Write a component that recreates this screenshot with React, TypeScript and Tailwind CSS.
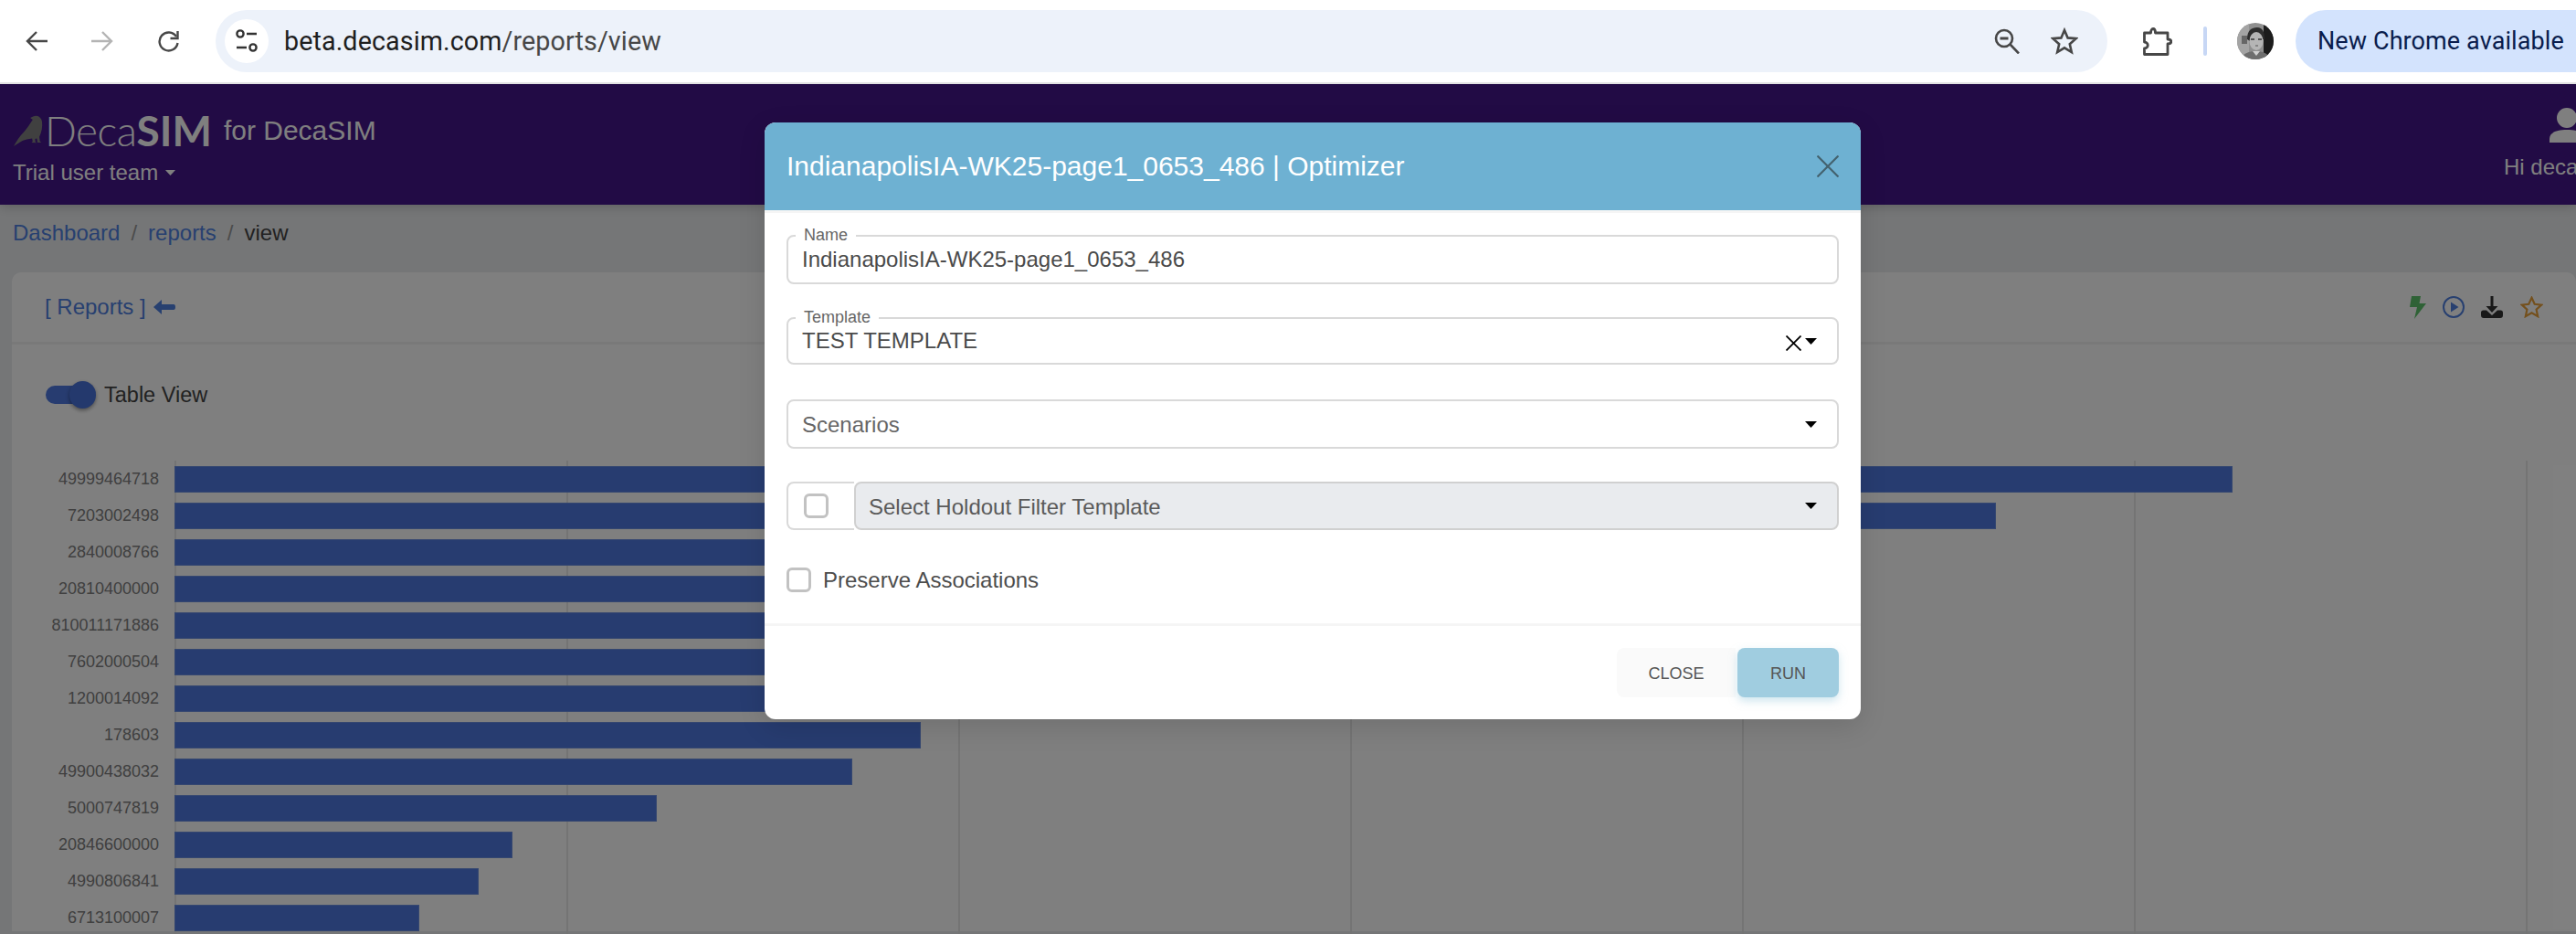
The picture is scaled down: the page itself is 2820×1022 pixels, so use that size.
import React from "react";

const bars: [string, number][] = [
  ["49999464718", 2253],
  ["7203002498", 1994],
  ["2840008766", 1600],
  ["20810400000", 1400],
  ["810011171886", 1300],
  ["7602000504", 1200],
  ["1200014092", 1050],
  ["178603", 817],
  ["49900438032", 742],
  ["5000747819", 528],
  ["20846600000", 370],
  ["4990806841", 333],
  ["6713100007", 268],
];

function Caret({ className }: { className: string }) {
  return (
    <svg viewBox="0 0 13 7" className={className} fill="currentColor">
      <path d="M0 0h13L6.5 7z" />
    </svg>
  );
}

function Bird({ className }: { className: string }) {
  return (
    <svg viewBox="10 30 100 105" className={className} fill="#808080">
      <path d="M13 134 C22 118 34 100 46 88 C56 76 66 62 76 46 L68 40 C74 37 80 33 88 33 C98 34 105 41 107 52 C109 68 106 88 98 103 L100 118 L105 122 L90 122 L92 120 L90 108 L84 110 L85 120 L90 123 L72 122 L76 118 L74 108 C62 110 50 112 42 116 C32 122 22 128 13 134 Z" />
    </svg>
  );
}

function Avatar() {
  return (
    <svg viewBox="0 0 40 40" className="h-10 w-10 shrink-0">
      <defs>
        <clipPath id="av">
          <circle cx="20" cy="20" r="20" />
        </clipPath>
      </defs>
      <g clipPath="url(#av)">
        <rect width="40" height="40" fill="#8f8f8f" />
        <rect x="0" y="0" width="13" height="40" fill="#a4a4a4" />
        <rect x="29" y="0" width="11" height="40" fill="#1c1c1c" />
        <rect x="5" y="14" width="6" height="9" fill="#666" />
        <path d="M11 18 C11 8 16 5 22 5 C28 5 30 10 30 18 L28 18 C27 13 24 12 20 12 C16 12 14 14 14 20 Z" fill="#2e2e2e" />
        <ellipse cx="21" cy="20" rx="7.5" ry="10" fill="#b5b5b5" />
        <path d="M15 18h4M23 18h4" stroke="#333" strokeWidth="1.5" />
        <path d="M20 25h3" stroke="#555" strokeWidth="1.2" />
        <path d="M4 40 C6 33 14 31 20 31 C28 31 34 33 36 40 Z" fill="#6e6e6e" />
        <path d="M17 31 L21 36 L25 31 Z" fill="#d0d0d0" />
      </g>
    </svg>
  );
}

function Chrome() {
  return (
    <div className="flex h-[90px] items-center bg-white [font-family:Roboto,sans-serif]">
      <svg viewBox="0 0 24 22" className="ml-[28px] h-[22px] w-[24px] shrink-0" fill="none" stroke="#474747" strokeWidth="2.4">
        <path d="M24 11H2M12 1 2 11l10 10" />
      </svg>
      <svg viewBox="0 0 24 22" className="ml-[48px] h-[22px] w-[24px] shrink-0" fill="none" stroke="#b4b4b4" strokeWidth="2.4">
        <path d="M0 11h22M12 1l10 10-10 10" />
      </svg>
      <svg viewBox="0 0 25 24" className="ml-[48px] h-[24px] w-[25px] shrink-0" fill="none" stroke="#474747" strokeWidth="2.4">
        <path d="M21 7 A10 10 0 1 0 22.5 14" />
        <path d="M22.5 1v8h-8" strokeWidth="2.4" />
      </svg>
      <div className="ml-[39px] flex h-[68px] w-[2071px] shrink-0 items-center rounded-full bg-[#edf2fa]">
        <div className="ml-[10px] flex h-[48px] w-[48px] items-center justify-center rounded-full bg-white">
          <svg viewBox="0 0 24 28" className="h-[28px] w-[24px]" fill="none" stroke="#333" strokeWidth="2.4">
            <circle cx="5" cy="6" r="3.6" />
            <path d="M12 6h11M1 21h11" />
            <circle cx="19" cy="21" r="3.6" />
          </svg>
        </div>
        <div className="ml-[17px] text-[28.7px] leading-[34px] tracking-[0.1px] text-[#1f1f1f]">
          beta.decasim.com<span className="text-[#474747]">/reports/view</span>
        </div>
        <svg viewBox="0 0 28 28" className="ml-auto h-[28px] w-[28px]" fill="none" stroke="#474747" strokeWidth="2.6">
          <circle cx="11" cy="11" r="9" />
          <path d="M17.5 17.5 27 27.5" />
          <path d="M6.5 11h9" strokeWidth="3" />
        </svg>
        <svg viewBox="0 0 30 30" className="ml-[34px] mr-[32px] h-[30px] w-[30px]" fill="none" stroke="#474747" strokeWidth="2.6" strokeLinejoin="miter">
          <path d="M15 3l3.6 8.4 9 .8-6.8 6 2 8.8L15 22.3 7.2 27l2-8.8-6.8-6 9-.8z" />
        </svg>
      </div>
      <svg viewBox="0 0 32 32" className="ml-[39px] h-[32px] w-[32px] shrink-0" fill="none" stroke="#474747" strokeWidth="2.8" strokeLinejoin="round">
        <path d="M1.5 7h7c0-6 5-6 5 0h13.5v7c5 0 5 5 0 5v11.5H1.5V24c5 0 5-7 0-7z" />
      </svg>
      <div className="ml-[34px] h-[32px] w-[4px] shrink-0 rounded-full bg-[#c7d7f5]" />
      <div className="ml-[33px] shrink-0">
        <Avatar />
      </div>
      <div className="ml-[24px] flex h-[68px] w-[308px] shrink-0 items-center rounded-l-full bg-[#d3e3fd] pl-[24px] text-[27px] tracking-[0.1px] text-[#0a1d4d] whitespace-nowrap">
        New Chrome available
      </div>
    </div>
  );
}

function Field({
  label,
  children,
  className,
}: {
  label?: string;
  children: React.ReactNode;
  className: string;
}) {
  return (
    <div className={`relative flex items-center rounded-[8px] border-2 border-[#d9d9d9] pl-[15px] pr-[22px] ${className}`}>
      {label && (
        <span className="absolute -top-[13px] left-[8px] bg-white px-[9px] text-[18px] leading-[22px] text-[#666]">
          {label}
        </span>
      )}
      {children}
    </div>
  );
}

function Modal() {
  return (
    <div className="absolute left-[837px] top-[42px] w-[1200px] overflow-hidden rounded-[12px] bg-white shadow-[0_8px_30px_rgba(0,0,0,0.12)] [font-family:'Liberation_Sans',Arial,sans-serif]">
      <div className="flex h-[96px] items-center justify-between bg-[#6eb1d2] pl-[24px] pr-[24px]">
        <div className="text-[30px] leading-[36px] text-white">IndianapolisIA-WK25-page1_0653_486 | Optimizer</div>
        <svg viewBox="0 0 24 24" className="h-[24px] w-[24px]" fill="none" stroke="#44626f" strokeWidth="2.2">
          <path d="M.5.5l23 23M23.5.5l-23 23" />
        </svg>
      </div>
      <div className="h-[3px] bg-[#f5f5f5]" />
      <div className="flex flex-col px-[24px] pt-[24px]">
        <Field label="Name" className="h-[54px]">
          <span className="text-[24px] text-[#4a4a4a]">IndianapolisIA-WK25-page1_0653_486</span>
        </Field>
        <Field label="Template" className="mt-[36px] h-[52px]">
          <span className="text-[24px] text-[#4a4a4a]">TEST TEMPLATE</span>
          <svg viewBox="0 0 17 17" className="ml-auto mt-[5px] h-[17px] w-[17px]" fill="none" stroke="#000" strokeWidth="1.8">
            <path d="M.5.5l16 16M16.5.5l-16 16" />
          </svg>
          <Caret className="ml-[4px] h-[7px] w-[13px] text-black" />
        </Field>
        <Field className="mt-[38px] h-[54px] justify-between">
          <span className="pt-[2px] text-[24px] text-[#666]">Scenarios</span>
          <Caret className="h-[7px] w-[13px] text-black" />
        </Field>
        <div className="mt-[36px] flex h-[53px]">
          <div className="flex w-[74px] items-center rounded-l-[8px] border-2 border-r-0 border-[#d9d9d9] pl-[17px]">
            <div className="h-[27px] w-[27px] rounded-[6px] border-[3px] border-[#c2c2c2] bg-white" />
          </div>
          <div className="flex flex-1 items-center justify-between rounded-[8px] border-2 border-[#d0d0d0] bg-[#e9ebee] pl-[14px] pr-[22px]">
            <span className="pt-[2px] text-[24px] text-[#5a5a5a]">Select Holdout Filter Template</span>
            <Caret className="h-[7px] w-[13px] text-black" />
          </div>
        </div>
        <div className="mb-[34px] mt-[41px] flex items-center gap-[13px]">
          <div className="h-[27px] w-[27px] rounded-[6px] border-[3px] border-[#c2c2c2] bg-white" />
          <span className="text-[24px] leading-[27px] text-[#4d4d4d]">Preserve Associations</span>
        </div>
      </div>
      <div className="h-[3px] bg-[#f5f5f5]" />
      <div className="flex justify-end px-[24px] pb-[24px] pt-[24px]">
        <div className="flex h-[54px] w-[130px] items-center justify-center rounded-l-[8px] bg-[#fafafa] pt-[2px] text-[18px] text-[#555]">
          CLOSE
        </div>
        <div className="ml-[2px] flex h-[54px] w-[111px] items-center justify-center rounded-[8px] bg-[#a0cde0] pt-[2px] text-[18px] text-[#555] shadow-[0_4px_10px_rgba(160,205,224,0.5)]">
          RUN
        </div>
      </div>
    </div>
  );
}

function Header() {
  return (
    <div className="relative flex h-[132px] justify-between overflow-hidden bg-[#44168a] pl-[14px] text-white shadow-[0_2px_12px_rgba(0,0,0,0.2)] [font-family:'Liberation_Sans',Arial,sans-serif]">
      <div className="pt-[33px]">
        <div className="flex h-[35px] items-center">
          <Bird className="h-[36px] w-[33px]" />
          <span className="ml-[2px] text-[46px] font-light tracking-[-0.5px] [font-family:Lato,sans-serif]">Deca</span>
          <span className="text-[46px] font-bold [font-family:Lato,sans-serif]">SIM</span>
          <span className="ml-[13px] text-[30px]">for DecaSIM</span>
        </div>
        <div className="mt-[15px] flex items-center text-[24px] leading-[28px]">
          Trial user team
          <Caret className="ml-[7px] h-[6px] w-[13px] text-white" />
        </div>
      </div>
      <div className="w-[79px] shrink-0 whitespace-nowrap">
        <svg viewBox="0 0 38 38" className="ml-[50px] mt-[26px] h-[38px] w-[38px]" fill="#ffffff">
          <circle cx="19" cy="11" r="11" />
          <path d="M0 38v-4c0-7 7-10 19-10s19 3 19 10v4z" />
        </svg>
        <div className="mt-[13px] text-[24px] leading-[28px]">Hi decasim</div>
      </div>
    </div>
  );
}

function CardIcons() {
  return (
    <div className="flex items-center">
      <svg viewBox="0 0 18 25" className="h-[25px] w-[18px]" fill="#5ec46c">
        <path d="M2 0h10l-1.5 8H18L5 25l3-13H0z" />
      </svg>
      <svg viewBox="0 0 24 24" className="ml-[18px] h-[24px] w-[24px]" fill="none" stroke="#5080e0" strokeWidth="2">
        <circle cx="12" cy="12" r="11" />
        <path d="M9 6.5v11l8.5-5.5z" fill="#5080e0" stroke="none" />
      </svg>
      <svg viewBox="0 0 24 24" className="ml-[18px] h-[24px] w-[24px]" fill="#333">
        <path d="M10.5 0h3v11h5L12 18 5.500 11h5z" />
        <path d="M0 18c0-1.500 1-2.500 2.500-2.500H6L12 21l6-5.500h3.500c1.500 0 2.500 1 2.500 2.500v3c0 1.700-1 3-3 3H3c-2 0-3-1.300-3-3z" />
      </svg>
      <svg viewBox="0 0 25 24" className="ml-[19px] mr-[36px] h-[24px] w-[25px]" fill="none" stroke="#e9a13b" strokeWidth="2.2">
        <path d="M12.500 1.800l3.200 7 7.500.8-5.600 5.100 1.600 7.500-6.700-3.900-6.700 3.900 1.600-7.500-5.600-5.100 7.500-.8z" />
      </svg>
    </div>
  );
}

function Chart() {
  return (
    <div className="relative mt-[57px]">
      <div className="absolute left-[178px] top-0 grid h-[600px] w-[2576px] grid-cols-6 border-r-2 border-[#e8e8e8]">
        {[0, 1, 2, 3, 4, 5].map((i) => (
          <div key={i} className="border-l-2 border-[#e8e8e8]" />
        ))}
      </div>
      <div className="relative flex flex-col gap-[11px] pt-[6px]">
        {bars.map(([label, w]) => (
          <div key={label} className="flex h-[29px] items-center">
            <div className="w-[161px] text-right text-[18px] text-[#808080]">{label}</div>
            <div
              className="ml-[17px] h-[29px] border border-[#6a8fe0] bg-[#4e78e0]"
              style={{ width: w }}
            />
          </div>
        ))}
      </div>
    </div>
  );
}

export default function App() {
  return (
    <div className="h-[1022px] w-[2820px] overflow-hidden bg-white">
      <Chrome />
      <div className="h-[2px] bg-[#e2e2e2]" />
      <div className="relative h-[930px] overflow-hidden bg-[#ebedef] [font-family:'Liberation_Sans',Arial,sans-serif]">
        <Header />
        <div className="flex h-[74px] gap-[12px] pl-[14px] pt-[17px] text-[24px] leading-[28px] text-[#999]">
          <span className="text-[#4f80e0]">Dashboard</span>
          <span>/</span>
          <span className="text-[#4f80e0]">reports</span>
          <span>/</span>
          <span className="text-[#444]">view</span>
        </div>
        <div className="ml-[13px] rounded-t-[10px] bg-white">
          <div className="flex h-[79px] items-center justify-between border-b-[3px] border-[#f2f2f2] pl-[36px]">
            <div className="flex items-center gap-[8px] text-[24px] text-[#4f80e0]">
              [ Reports ]
              <svg viewBox="0 0 24 16" className="h-[16px] w-[24px]" fill="currentColor">
                <path d="M0 8 9 0v5h13c1.500 0 2 1 2 3s-.5 3-2 3H9v5z" />
              </svg>
            </div>
            <CardIcons />
          </div>
          <div className="pt-[40px]">
            <div className="flex h-[30px] items-center pl-[37px]">
              <div className="relative h-[20px] w-[50px] rounded-full bg-[#4e78e0]">
                <div className="absolute -top-[5px] left-[26px] h-[30px] w-[29px] rounded-full bg-[#4872da] shadow-[0_2px_4px_rgba(0,0,0,0.4)]" />
              </div>
              <span className="ml-[14px] pt-[2px] text-[23.5px] text-[#444]">Table View</span>
            </div>
            <Chart />
          </div>
        </div>
        <div className="absolute inset-0 bg-black/50" />
        <Modal />
      </div>
    </div>
  );
}
